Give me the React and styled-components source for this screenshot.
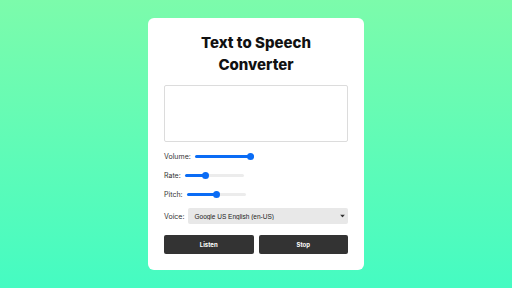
import React, { useState } from "react";
import styled, { createGlobalStyle } from "styled-components";

const GlobalStyle = createGlobalStyle`
  html, body {
    margin: 0;
    padding: 0;
  }
  body {
    font-family: Inter, "Liberation Sans", sans-serif;
  }
  * {
    box-sizing: border-box;
  }
`;

const Slider = ({ min, max, step, value, onChange }) => {
  const pct = ((value - min) / (max - min)) * 100;
  return (
    <Range
      type="range"
      min={min}
      max={max}
      step={step}
      value={value}
      onChange={({ target }) => onChange(Number(target.value))}
      style={{
        background: `linear-gradient(to right, #0a6cf5 ${pct}%, #ececec ${pct}%)`,
      }}
    />
  );
};

const App = () => {
  const [text, setText] = useState("");
  const [volume, setVolume] = useState(1);
  const [rate, setRate] = useState(1);
  const [pitch, setPitch] = useState(1);

  return (
    <Main>
      <GlobalStyle />
      <Card>
        <Title>
          Text to Speech
          <br />
          Converter
        </Title>
        <TextArea value={text} onChange={({ target }) => setText(target.value)} />
        <Controls>
          <Row>
            <Label>Volume:</Label>
            <Slider min={0} max={1} step={0.1} value={volume} onChange={setVolume} />
          </Row>
          <Row>
            <Label>Rate:</Label>
            <Slider min={0.5} max={2} step={0.1} value={rate} onChange={setRate} />
          </Row>
          <Row>
            <Label>Pitch:</Label>
            <Slider min={0} max={2} step={0.1} value={pitch} onChange={setPitch} />
          </Row>
          <Row>
            <Label>Voice:</Label>
            <SelectWrap>
              <Select>
                <option>Google US English (en-US)</option>
              </Select>
              <Arrow>
                <svg width="5" height="3" viewBox="0 0 5 3">
                  <path d="M0 0h5L2.5 3z" fill="#333" />
                </svg>
              </Arrow>
            </SelectWrap>
          </Row>
        </Controls>
        <Buttons>
          <Button>Listen</Button>
          <Button>Stop</Button>
        </Buttons>
      </Card>
    </Main>
  );
};

export default App;

const Main = styled.div`
  width: 100vw;
  height: 100vh;
  display: flex;
  justify-content: center;
  align-items: center;
  background: linear-gradient(to bottom, #7cfbab, #45fbc2);
`;

const Card = styled.div`
  width: 216px;
  height: 252px;
  background-color: #fff;
  border-radius: 6px;
  padding: 14px 16px 16px;
  display: flex;
  flex-direction: column;
  & > * {
    flex-shrink: 0;
  }
`;

const Title = styled.h1`
  margin: 0 0 9px;
  text-align: center;
  font-size: 15px;
  line-height: 22px;
  font-weight: 800;
  color: #111;
`;

const TextArea = styled.textarea`
  display: block;
  width: 100%;
  height: 57px;
  margin: 0;
  border: 1px solid #dcdcdc;
  border-radius: 2px;
  resize: none;
  outline: none;
  padding: 4px;
  font-family: inherit;
  font-size: 7px;
`;

const Controls = styled.div`
  margin-top: 9px;
  display: flex;
  flex-direction: column;
  gap: 9px;
`;

const Row = styled.div`
  display: flex;
  align-items: center;
  min-height: 10px;
`;

const Label = styled.label`
  font-size: 7px;
  color: #333;
  margin-right: 4px;
`;

const Range = styled.input`
  -webkit-appearance: none;
  appearance: none;
  width: 59px;
  height: 3px;
  border-radius: 2px;
  margin: 0;
  outline: none;
  &::-webkit-slider-thumb {
    -webkit-appearance: none;
    appearance: none;
    width: 7px;
    height: 7px;
    border-radius: 50%;
    background: #0a6cf5;
    cursor: pointer;
  }
`;

const SelectWrap = styled.div`
  position: relative;
  flex: 1;
  display: flex;
`;

const Select = styled.select`
  -webkit-appearance: none;
  appearance: none;
  display: block;
  width: 100%;
  height: 16px;
  margin: 0;
  border: none;
  border-radius: 2px;
  background-color: #e8e8e8;
  padding: 0 6px;
  font-family: "Liberation Sans", sans-serif;
  font-size: 6.5px;
  color: #222;
  outline: none;
`;

const Arrow = styled.span`
  position: absolute;
  right: 3px;
  top: 50%;
  transform: translateY(-50%);
  display: flex;
  pointer-events: none;
`;

const Buttons = styled.div`
  margin-top: 11px;
  display: grid;
  grid-template-columns: 1fr 1fr;
  gap: 5px;
`;

const Button = styled.button`
  height: 19px;
  border: none;
  border-radius: 2px;
  background-color: #333;
  color: #fff;
  font-family: inherit;
  font-size: 6px;
  font-weight: 700;
  cursor: pointer;
`;
